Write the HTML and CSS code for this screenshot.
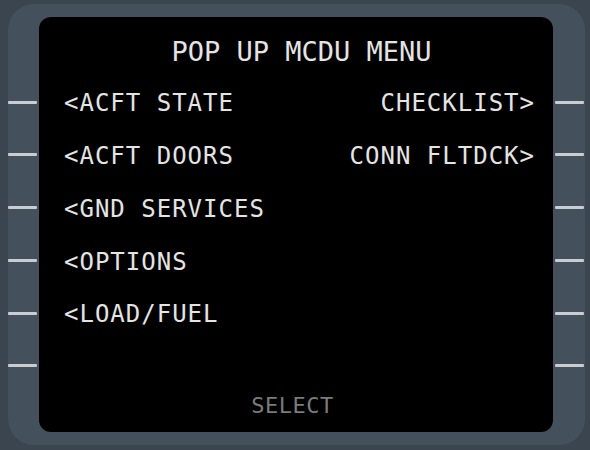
FILE: index.html
```html
<!DOCTYPE html>
<html>
<head>
<meta charset="utf-8">
<link rel="stylesheet" href="styles.css">
</head>
<body>
<div class="bezel">
  <div class="lsk-col">
    <div class="lsk"></div><div class="lsk"></div><div class="lsk"></div>
    <div class="lsk"></div><div class="lsk"></div><div class="lsk"></div>
  </div>
  <div class="screen">
    <div class="title">POP UP MCDU MENU</div>
    <div class="rows">
      <div class="row"><span>&lt;ACFT STATE</span><span>CHECKLIST&gt;</span></div>
      <div class="row"><span>&lt;ACFT DOORS</span><span>CONN FLTDCK&gt;</span></div>
      <div class="row"><span>&lt;GND SERVICES</span><span></span></div>
      <div class="row"><span>&lt;OPTIONS</span><span></span></div>
      <div class="row"><span>&lt;LOAD/FUEL</span><span></span></div>
      <div class="row"><span></span><span></span></div>
    </div>
    <div class="select">SELECT</div>
  </div>
  <div class="lsk-col">
    <div class="lsk"></div><div class="lsk"></div><div class="lsk"></div>
    <div class="lsk"></div><div class="lsk"></div><div class="lsk"></div>
  </div>
</div>
</body>
</html>
```
FILE: styles.css
```css
html, body {
  margin: 0;
  padding: 0;
}
body {
  background: #3b4550;
  width: 590px;
  height: 450px;
  overflow: hidden;
}
.bezel {
  margin: 4px 5px 0 8px;
  height: 441px;
  box-sizing: border-box;
  padding-top: 13px;
  border-radius: 26px;
  background: #44505b;
  display: flex;
  gap: 2px;
}
.lsk-col {
  width: 29px;
  padding-top: 83.5px;
  display: flex;
  flex-direction: column;
  gap: 49.8px;
}
.lsk {
  height: 3px;
  background: #c9cdd1;
  border-radius: 1px;
}
.screen {
  width: 514px;
  height: 415px;
  box-sizing: border-box;
  background: #000;
  border-radius: 12px;
  padding: 20px 18px 0 25px;
  font-family: "DejaVu Sans Mono", monospace;
  color: #e4e4e4;
}
.title {
  font-size: 27px;
  line-height: 30px;
  text-align: center;
  padding-left: 4px;
  margin-bottom: 10.3px;
}
.row {
  display: flex;
  justify-content: space-between;
  height: 52.8px;
  line-height: 52.8px;
  font-size: 24px;
  letter-spacing: 1px;
  white-space: pre;
}
.select {
  font-size: 22px;
  line-height: 24px;
  letter-spacing: 0.5px;
  text-align: center;
  padding-right: 14px;
  color: #7b7b7b;
}
```
